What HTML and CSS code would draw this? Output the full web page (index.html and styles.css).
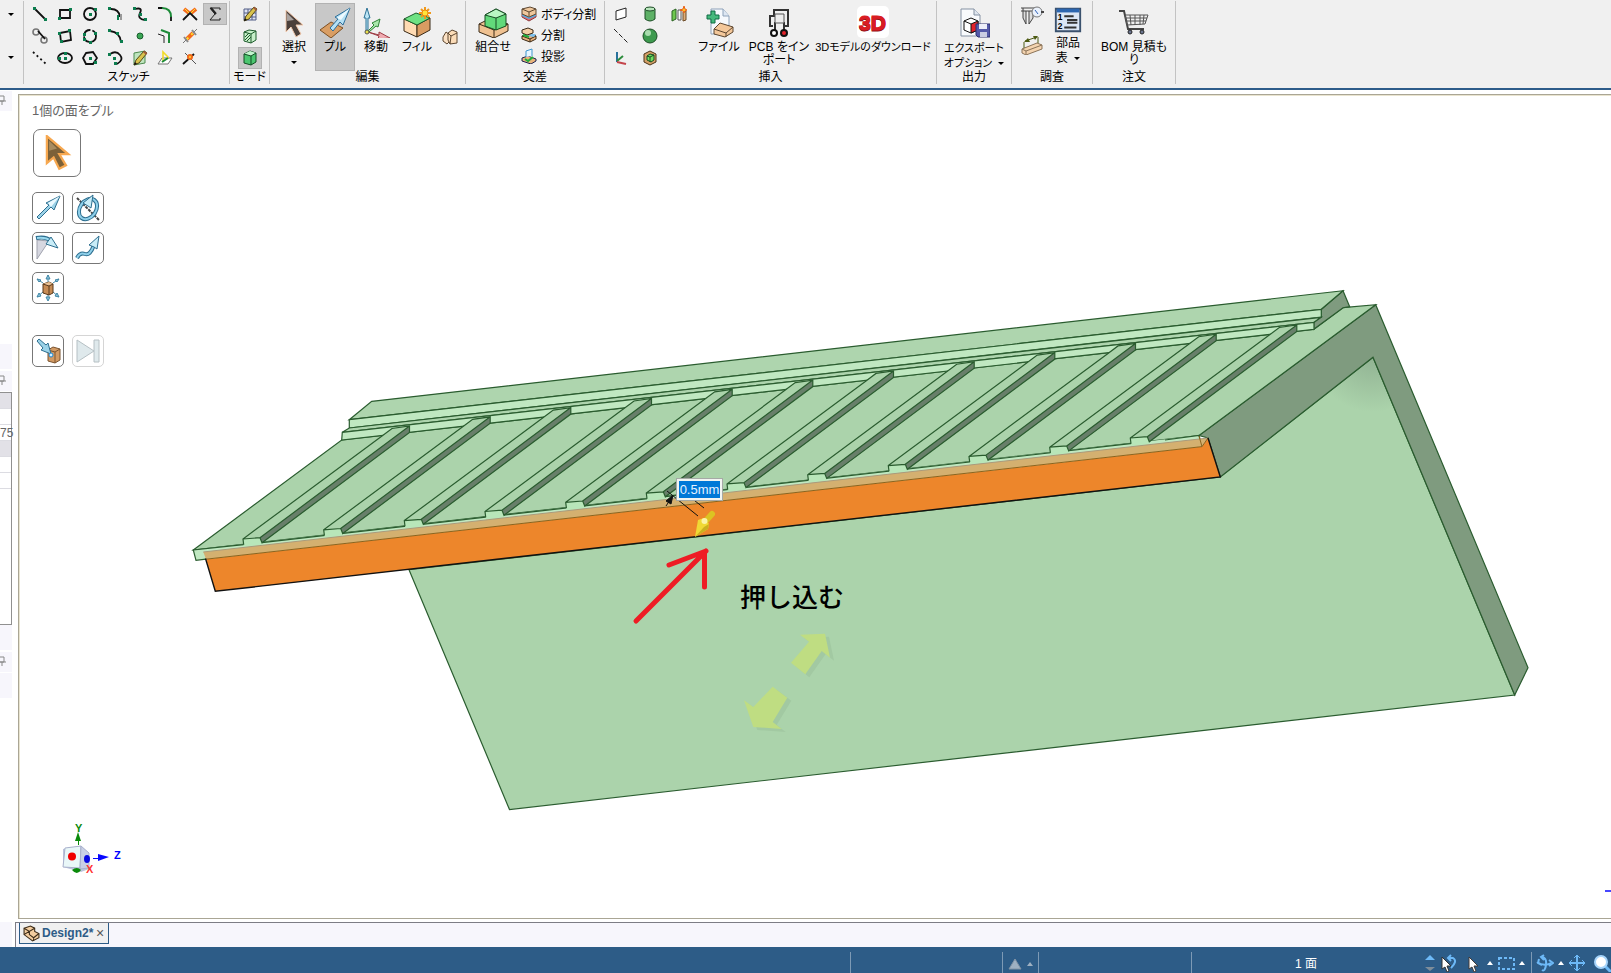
FILE: index.html
```
<!DOCTYPE html>
<html lang="ja">
<head>
  <meta charset="UTF-8">
  <title>Design2</title>
  <link rel="stylesheet" href="styles.css">
</head>
<body>
  <!-- リボン -->
  <header class="ribbon">
    <section class="group stub">
      <button class="drop" title="その他"><span class="caret"></span></button>
      <button class="drop" title="その他"><span class="caret"></span></button>
    </section>

    <section class="group sketch">
      <div class="sketch-grid">
        <button class="tool" title="線"><svg viewBox="0 0 16 16"><path class="ln" d="M3 3l10 10"/><path class="nd" d="M1 1h3v3h-3zM12 12h3v3h-3z"/></svg></button>
        <button class="tool" title="長方形"><svg viewBox="0 0 16 16"><path class="ln" d="M3 4h10v8h-10z"/><path class="nd" d="M1 11h3v3h-3zM12 2h3v3h-3z"/></svg></button>
        <button class="tool" title="円"><svg viewBox="0 0 16 16"><circle class="ln" cx="8" cy="8" r="6"/><path class="nd" d="M7 7h3v3h-3zM12 2h3v3h-3z"/></svg></button>
        <button class="tool" title="接円弧"><svg viewBox="0 0 16 16"><path class="ln" d="M4 3q8 0 9 8"/><path d="M14 8v6" stroke="#999" stroke-width="2"/><path class="nd" d="M1 1h3v3h-3zM10 9h2v5h-2z"/></svg></button>
        <button class="tool" title="スプライン"><svg viewBox="0 0 16 16"><path class="ln" d="M3 3q8-2 5 4t5 7"/><path class="nd" d="M1 1h3v3h-3zM7 7h3v3h-3zM12 12h3v3h-3z"/></svg></button>
        <button class="tool" title="丸コーナー"><svg viewBox="0 0 16 16"><path class="ln" d="M1 2h5M14 10v5"/><path class="gn" d="M5 2q9 0 9 9"/></svg></button>
        <button class="tool" title="トリム"><svg viewBox="0 0 16 16"><path d="M2 3l5 4M14 3l-5 4" stroke="#f36a1c" stroke-width="4"/><path d="M3 3l4 4M13 3l-4 4" stroke="#ffe12e"/><path class="ln" d="M1 14l7-7l7 7"/></svg></button>
        <button class="tool on" title="数式"><svg viewBox="0 0 16 16"><path class="thin" d="M13 4v-2h-10l5 6l-5 6h10v-2"/><path d="M4 2l5 6" stroke="#222" stroke-width="2"/></svg></button>

        <button class="tool" title="接線"><svg viewBox="0 0 16 16"><circle cx="4" cy="4" r="3" fill="none" stroke="#777" stroke-width="1.6"/><circle cx="12" cy="12" r="3" fill="none" stroke="#777" stroke-width="1.6"/><path class="ln" d="M6 3l7 8"/></svg></button>
        <button class="tool" title="3点長方形"><svg viewBox="0 0 16 16"><path class="ln" d="M3 5l10-2l1 9l-10 2z"/><path class="nd" d="M1 4h3v3h-3zM11 1h3v3h-3zM3 12h3v3h-3z"/></svg></button>
        <button class="tool" title="3点円"><svg viewBox="0 0 16 16"><circle class="ln" cx="8" cy="8" r="6" stroke-dasharray="8 2"/><path class="nd" d="M1 5h3v3h-3zM12 4h3v3h-3zM7 13h3v3h-3zM1 10h3v3h-3z"/></svg></button>
        <button class="tool" title="3点円弧"><svg viewBox="0 0 16 16"><path class="ln" d="M3 3q10 1 11 11"/><path class="nd" d="M1 1h3v3h-3zM9 4h3v3h-3zM13 12h3v3h-3z"/></svg></button>
        <button class="tool" title="点"><svg viewBox="0 0 16 16"><circle cx="8" cy="8" r="3" fill="#3aa655" stroke="#185c2b"/></svg></button>
        <button class="tool" title="オフセット"><svg viewBox="0 0 16 16"><path class="thin" d="M1 6l6 2v7"/><path class="gn" d="M4 2l8 3v10"/></svg></button>
        <button class="tool" title="分割"><svg viewBox="0 0 16 16"><path d="M1 15l14-14" stroke="#777"/><path d="M5 11l6-6" stroke="#f36a1c" stroke-width="4"/><path d="M10 2l4 5M2 9l4 5" stroke="#888" stroke-width="2"/><path d="M5 11l6-6" stroke="#ffe12e" stroke-width="2" stroke-dasharray="2 4"/></svg></button>
        <span></span>

        <button class="tool" title="作成線"><svg viewBox="0 0 16 16"><path class="ln" stroke-dasharray="2 3" d="M1 2l13 12"/></svg></button>
        <button class="tool" title="楕円"><svg viewBox="0 0 16 16"><ellipse class="ln" cx="8" cy="8" rx="7" ry="5"/><path class="nd" d="M1 7h3v3h-3zM7 7h3v3h-3zM7 2h3v3h-3z"/></svg></button>
        <button class="tool" title="多角形"><svg viewBox="0 0 16 16"><path class="ln" d="M4 3l7-1l4 6l-4 6h-7l-3-6z"/><path class="nd" d="M7 7h3v3h-3zM12 11h3v3h-3z"/></svg></button>
        <button class="tool" title="掃引円弧"><svg viewBox="0 0 16 16"><path class="ln" d="M3 4q6-4 10 1t-3 9"/><path class="nd" d="M1 3h3v3h-3zM6 7h3v3h-3zM7 12h3v3h-3z"/></svg></button>
        <button class="tool" title="面カーブ"><svg viewBox="0 0 16 16"><path d="M2 3l11-2v12l-11 2z" fill="#bfe5be" stroke="#4d8a4f"/><use href="#pencil"/></svg></button>
        <button class="tool" title="スケッチに投影"><svg viewBox="0 0 16 16"><path d="M1 14l4-6h10l-4 6z" fill="#fff" stroke="#777"/><path d="M6 11v-9l5 5v2" fill="none" stroke="#f2dc28" stroke-width="1.6"/><path class="gn" d="M5 12l6-4"/></svg></button>
        <button class="tool" title="コーナー作成"><svg viewBox="0 0 16 16"><path class="ln" d="M1 14l11-10"/><path d="M3 3l11 11" stroke="#555"/><circle cx="8" cy="7" r="3" fill="#f36a1c"/><circle cx="8" cy="7" r="1" fill="#ffe12e"/></svg></button>
      </div>
      <h2>スケッチ</h2>
    </section>

    <section class="group mode">
      <div class="stack">
        <button class="tool" title="スケッチモード"><svg viewBox="0 0 16 16"><path d="M2 3h12v11h-12zM6 3v11M10 3v11M2 7h12M2 11h12" fill="#dfe3f2" stroke="#515c85"/><use href="#pencil"/></svg></button>
        <button class="tool" title="断面モード"><svg viewBox="0 0 16 16"><path d="M2 4l5-2l7 1v9l-5 3l-7-2z" fill="#c6efc9" stroke="#1c5a2b"/><path d="M2 4l7 2v9M9 6l5-3M3 9l4-4M3 12l5-5M5 13l4-4" fill="none" stroke="#1c5a2b"/></svg></button>
        <button class="tool on" title="3Dモード"><svg viewBox="0 0 16 16"><path d="M2 4l6-3l6 2v9l-5 3l-7-2z" fill="#4bc66f" stroke="#134d24"/><path d="M2 4l6-3l6 2l-5 3z" fill="#c3f4cd"/><path d="M2 4l7 2v9M9 6l5-3" fill="none" stroke="#134d24"/></svg></button>
      </div>
      <h2>モード</h2>
    </section>

    <section class="group edit">
      <div class="row">
        <button class="big">
          <svg viewBox="0 0 32 32"><path d="M8 4v22l5-5l5 10l5-3l-5-9h7z" fill="#4b403b" stroke="#f2c9ad"/><path d="M9 7v8l7-1z" fill="#aaa3a0"/></svg>
          選択<span class="caret"></span>
        </button>
        <button class="big on">
          <svg viewBox="0 0 32 32"><path d="M1 24l11-8l12 6l-12 10z" fill="#d99e64" stroke="#7d4f22"/><path d="M11 22l8-9l-3-2l15-9l-7 17l-3-3l-7 9z" fill="#b5e1f5" stroke="#2d6e99"/><path d="M18 12l13-10l-9 12z" fill="#eefaff"/></svg>
          プル
        </button>
        <button class="big">
          <svg viewBox="0 0 32 32"><path d="M6 26v-14h-2l3-10l3 10h-2v14z" fill="#bde6f6" stroke="#2d7296"/><path d="M8 25l6-6l-2-2l8-4l-2 8l-2-1l-7 6z" fill="#a9e7ab" stroke="#2d8236"/><path d="M8 26l11 3v-3l11 6l-12 1l1-3z" fill="#f0aab0" stroke="#9d3d45"/><circle cx="7" cy="26" r="2" fill="#e9df4b" stroke="#555"/></svg>
          移動
        </button>
        <button class="big">
          <svg viewBox="0 0 32 32"><path d="M3 13l13 6v12l-13-6z" fill="#ffdbb3" stroke="#3a2a17"/><path d="M16 19l13-7v12l-13 7z" fill="#d99c62" stroke="#3a2a17"/><path d="M3 13l12-6l14 5l-13 7z" fill="#6fe283" stroke="#1d5c2b"/><path d="M24 1v12M18 7h12M20 3l8 8M28 3l-8 8" stroke="#f19a1c" stroke-width="2"/><circle cx="24" cy="7" r="3" fill="#ffe53b" stroke="#e88712"/></svg>
          フィル
        </button>
        <button class="tool side" title="置換"><svg viewBox="0 0 16 16"><path d="M1 8l3-5l4 3v6l-3 3l-4-3z" fill="#fbe1c4" stroke="#5c4630"/><path d="M6 4l4-3l5 2v11l-7 1l-2-4z" fill="#fbdcb8" stroke="#5c4630"/><path d="M6 4l3 3l6-3M9 7l-1 8" fill="none" stroke="#5c4630"/></svg></button>
      </div>
      <h2>編集</h2>
    </section>

    <section class="group cross">
      <div class="row">
        <button class="big wide">
          <svg viewBox="0 0 32 32"><path d="M2 18l10-5l19 5v7l-14 7l-15-6z" fill="#efc191" stroke="#3a2a17"/><path d="M2 18l15 6v8M17 24l14-6" fill="none" stroke="#3a2a17"/><path d="M8 9l11-6l10 5v12l-10 4l-11-4z" fill="#62d97a" stroke="#174d23"/><path d="M8 9l11-6l10 5l-10 4z" fill="#b9f6c3" stroke="#174d23"/><path d="M19 12v12" stroke="#174d23"/></svg>
          組合せ
        </button>
        <div class="list">
          <button class="item"><svg viewBox="0 0 16 16"><path d="M1 11l7 4l7-4v-3h-14z" fill="#e06b70" stroke="#8e3a3d"/><path d="M1 8l7 3l7-3v2l-7 3l-7-3z" fill="#5aa9dd"/><path d="M1 3l8-2l6 2v5l-7 3l-7-3z" fill="#efc79c" stroke="#5c4630"/><path d="M1 3l7 3l7-3M8 6v4" fill="none" stroke="#5c4630"/></svg>ボディ分割</button>
          <button class="item"><svg viewBox="0 0 16 16"><path d="M1 9l7-3l7 3v3l-6 3l-8-3z" fill="#e8b27c" stroke="#3a2a17"/><path d="M1 9l8 3l6-3M9 12v3" fill="none" stroke="#3a2a17"/><path d="M7 9l3-2h5l-2 3z" fill="#7cc0ec"/><path d="M1 3l6-2l5 2v3l-6 2l-5-2z" fill="#f5cfa5" stroke="#3a2a17"/><path d="M2 8l6 2" stroke="#1fae3a" stroke-width="2"/></svg>分割</button>
          <button class="item"><svg viewBox="0 0 16 16"><path d="M1 10l6-2l8 3v2l-5 3l-9-3z" fill="#e8b27c" stroke="#1d2350"/><path d="M5 9v-6l6-2v7" fill="#e6f6ff" stroke="#3e96cf"/><path d="M4 11l3 2l5-4" fill="none" stroke="#1fae3a" stroke-width="2"/></svg>投影</button>
        </div>
      </div>
      <h2>交差</h2>
    </section>

    <section class="group insert">
      <div class="row">
        <div class="insert-grid">
          <button class="tool" title="平面"><svg viewBox="0 0 16 16"><path d="M3 5l10-3v9l-10 3z" fill="#fff" stroke="#222"/></svg></button>
          <button class="tool" title="円柱"><svg viewBox="0 0 16 16"><path d="M3 3v10q5 4 10 0v-10z" fill="#5eb167" stroke="#1d4d26"/><ellipse cx="8" cy="3" rx="5" ry="2" fill="#b7e4bb" stroke="#1d4d26"/></svg></button>
          <button class="tool" title="シェル"><svg viewBox="0 0 16 16"><path d="M1 5l4-2v10l-4 2z" fill="#6fc84f" stroke="#2b6322"/><path d="M7 4h3v10h-3z" fill="#fff" stroke="#555"/><path d="M12 6l3-1v9l-3 1z" fill="#e0ad78" stroke="#6b4a26"/><path d="M13 0l1 3l2 1l-2 1l-1 2l-1-2l-3-1l3-1z" fill="#ffc321" stroke="#e8611c"/></svg></button>
          <button class="tool" title="軸"><svg viewBox="0 0 16 16"><path class="thin" stroke-dasharray="5 2" d="M1 1l14 14"/></svg></button>
          <button class="tool" title="球"><svg viewBox="0 0 16 16"><circle cx="8" cy="8" r="7" fill="#3d9a4e" stroke="#1d4d26"/><circle cx="6" cy="5" r="3" fill="#a9dcae"/></svg></button>
          <span></span>
          <button class="tool" title="原点"><svg viewBox="0 0 16 16"><path d="M4 2v10" stroke="#28719c" stroke-width="2"/><path d="M4 11l6-5" stroke="#2d8c3c" stroke-width="2"/><path d="M4 12l9 2" stroke="#c4454b" stroke-width="2"/></svg></button>
          <button class="tool" title="エンクロージャ"><svg viewBox="0 0 16 16"><path d="M2 4l6-3l6 3v8l-6 3l-6-3z" fill="#d59f66" stroke="#4a3418"/><path d="M5 6l3-2l4 1v5l-3 2l-4-2z" fill="#70dd5f" stroke="#174d23"/><path d="M5 6l3 1v5M8 7l4-2" fill="none" stroke="#174d23"/></svg></button>
        </div>
        <button class="big file">
          <svg viewBox="0 0 32 32"><path d="M8 3h12l6 7v18h-18z" fill="#f6f9fd" stroke="#8ea2ba"/><path d="M20 3v7h6" fill="#dde7f3" stroke="#8ea2ba"/><path d="M8 5h4v4h4v4h-4v4h-4v-4h-4v-4h4z" fill="#45b97c" stroke="#116d45"/><path d="M11 23l6-6l13 4v5l-8 5l-11-3z" fill="#f3c79a" stroke="#5c4630"/><path d="M11 23l12 4l7-6M23 27v4" fill="none" stroke="#5c4630"/></svg>
          ファイル
        </button>
        <button class="big pcb">
          <svg viewBox="0 0 32 32"><path d="M10 20h-3v-10h4v-6h14v16h-4M12 24v-8M21 24v-8" fill="none" stroke="#333" stroke-width="2"/><path d="M12 8h9v9h-9z" fill="#eee" stroke="#555"/><circle cx="11" cy="27" r="3" fill="#fff" stroke="#111" stroke-width="2"/><circle cx="21" cy="27" r="3" fill="#e3222a" stroke="#111" stroke-width="2"/></svg>
          PCB をイン<br>ポート
        </button>
        <button class="big model">
          <svg viewBox="0 0 32 32"><rect width="32" height="32" rx="5" fill="#fff"/><text class="logo3d shade" x="2" y="25">3D</text><text class="logo3d" x="2" y="24">3D</text></svg>
          3Dモデルのダウンロード
        </button>
      </div>
      <h2>挿入</h2>
    </section>

    <section class="group output">
      <button class="big tall">
        <svg viewBox="0 0 32 32"><path d="M3 3h13l6 6v21h-19z" fill="#f8fafc" stroke="#8592a3"/><path d="M16 3v6h6" fill="#dfe6ef" stroke="#8592a3"/><path d="M6 15l7-3l7 3v9l-7 3l-7-3z" fill="#fff" stroke="#111"/><path d="M13 18l7-3v9l-7 3z" fill="#e3222a" stroke="#111"/><path d="M6 15l7 3" stroke="#111"/><path d="M18 18h14v13h-12l-2-2z" fill="#5459a8" stroke="#2d3170"/><path d="M21 18h8v5h-8z" fill="#eceef8"/><path d="M22 26h7v5h-7z" fill="#c9cce2"/></svg>
        <span>エクスポート<br>オプション <span class="caret"></span></span>
      </button>
      <h2>出力</h2>
    </section>

    <section class="group check">
      <div class="row">
        <div class="measure">
          <button class="tool" title="測定"><svg viewBox="0 0 24 20"><path d="M1 2h14M1 5h14M3 2v10l3 6v-13M9 5v13l4-6v-7" fill="#ddd" stroke="#444"/><circle cx="17" cy="6" r="5" fill="#eaf1fb" stroke="#777"/><path d="M15 4l3 4" stroke="#3162b8"/><path d="M21 6h3" stroke="#444" stroke-width="2"/></svg></button>
          <button class="tool" title="寸法"><svg viewBox="0 0 24 20"><path d="M2 14l15-6l5 2v4l-16 6l-4-2z" fill="#f4d4b0" stroke="#8a7358"/><path d="M2 14l4 2l16-6M6 16v4" fill="none" stroke="#8a7358"/><path d="M4 13v-6M18 8v-6M5 6l12-4" stroke="#4c5a12"/><path d="M4 7l4-4l2 4zM18 1h-5l2 4z" fill="#4c5a12"/></svg></button>
        </div>
        <button class="big parts">
          <svg viewBox="0 0 32 32"><path d="M3 5h26v24h-26z" fill="#dbe6f5" stroke="#3b526e" stroke-width="2"/><path d="M4 5h24v4h-24z" fill="#2c66b0"/><path d="M12 13h10M15 17h11M15 20h11M12 25h13" stroke="#333" stroke-width="2"/><text x="5" y="17" class="num">1</text><text x="5" y="27" class="num">2</text></svg>
          <span>部品<br>表 <span class="caret"></span></span>
        </button>
      </div>
      <h2>調査</h2>
    </section>

    <section class="group order">
      <button class="big tall">
        <svg viewBox="0 0 32 32"><path d="M1 5h5l4 18h16" fill="none" stroke="#444" stroke-width="2"/><path d="M7 9h23l-3 9l-18 1zM8 12h21M8 15h20M12 9l1 10M17 9v10M22 9v10M26 9l-1 9" fill="none" stroke="#555"/><circle cx="12" cy="26" r="2" fill="#6b7590" stroke="#222"/><circle cx="24" cy="26" r="2" fill="#6b7590" stroke="#222"/></svg>
        BOM 見積も<br>り
      </button>
      <h2>注文</h2>
    </section>
  </header>

  <!-- 作業エリア -->
  <main class="work">
    <aside class="panels">
      <div class="panel-head"><svg class="pin" viewBox="0 0 6 10"><path d="M0 1h4v5h-4M0 6h6M2 6v4" fill="none" stroke="#888"/></svg></div>
      <div class="panel-tree"></div>
      <div class="panel-foot"></div>
      <div class="panel-head"><svg class="pin" viewBox="0 0 6 10"><path d="M0 1h4v5h-4M0 6h6M2 6v4" fill="none" stroke="#888"/></svg></div>
      <div class="props">
        <div class="prop cat"></div>
        <div class="prop"></div>
        <div class="prop val">75</div>
        <div class="prop cat"></div>
        <div class="prop"></div>
        <div class="prop"></div>
      </div>
      <div class="panel-foot"></div>
      <div class="panel-head"><svg class="pin" viewBox="0 0 6 10"><path d="M0 1h4v5h-4M0 6h6M2 6v4" fill="none" stroke="#888"/></svg></div>
      <div class="panel-foot"></div>
    </aside>

    <section class="viewport">
      <svg class="scene" viewBox="20 96 1591 822" preserveAspectRatio="xMinYMin meet">
        <defs>
          <!-- 鉛筆（ツールアイコン共用） -->
          <g id="pencil"><path d="M2 15l2-5l8-9l3 2l-8 10z" fill="#d9c34c" stroke="#54491c"/><path d="M2 15l1-3l2 2z" fill="#111"/><path d="M11 2l1-1l3 2l-1 2z" fill="#a55a3a"/></g>
          <radialGradient id="wall" gradientUnits="userSpaceOnUse" cx="1373" cy="352" r="60">
            <stop offset="0" stop-color="#8fb091"/><stop offset="1" stop-color="#abd3ab"/>
          </radialGradient>
          <!-- リブ1本分 -->
          <g id="rib">
            <path d="M243 539l139-103l10-8l18-2l-150 112z" fill="#abd3ab"/>
            <path d="M260 537.7L409.5 426v6.5L262 543z" fill="#687f6a"/>
            <path d="M243 539l17-1.3l2 5l-1 5l-17 2l-.3-5z" fill="#b8e6b9"/>
            <path d="M243.7 544.7l-.7-5.7L382 436l10-7.5l17.5-2.5v6.5L262 542.7l-2-5L409.5 426M243 539l17-1.3" class="edge"/>
          </g>
        </defs>

        <!-- 下側の壁 -->
        <path class="edge wall" d="M409 569.7L509.5 809.5L1514.7 695L1373 357.3L1220 477z"/>
        <path class="edge dark" d="M1199 435.5L1375.7 304.7L1528 667.7L1514.7 695L1373 357.3L1220.3 477L1208 438z"/>
        <!-- 屋根面 -->
        <path class="edge face" d="M193.3 550L341.7 440L1313.7 329.3L1343 307.7L1375.7 304.7L1199 435.5z"/>
        <!-- 棟 -->
        <path class="edge dark" d="M1321.3 309.3L1343 290.7L1349.7 306.7L1343 307.7L1313.7 329.3V322L1321 317z"/>
        <path class="edge top" d="M371.7 401.3L1343 290.7L1321.3 309.3L349.3 419.7z"/>
        <path class="edge lit" d="M349.3 419.7L1321.3 309.3V317L349.3 428z"/>
        <path class="edge top" d="M349.3 428L1321 317.3L1314 322.3L342.3 432.3z"/>
        <path class="edge lit" d="M342.3 432.3L1314 322.3V329.3L341.7 440z"/>
        <!-- 軒先 -->
        <path class="lit" d="M193.3 550L1199 435.5L1202 446.6L196 560.3z"/>
        <path class="edge" d="M243.7 544.7L193.3 550L196 560.3L206 559.2M1165 440L1199 435.5L1202 446"/>
        <path class="edge" d="M262 542.7L1148 441.7"/>
        <use href="#rib"/>
        <use href="#rib" x="80.7" y="-9.2"/>
        <use href="#rib" x="161.3" y="-18.4"/>
        <use href="#rib" x="242" y="-27.5"/>
        <use href="#rib" x="322.7" y="-36.7"/>
        <use href="#rib" x="403.3" y="-45.9"/>
        <use href="#rib" x="484" y="-55.1"/>
        <use href="#rib" x="564.7" y="-64.3"/>
        <use href="#rib" x="645.3" y="-73.4"/>
        <use href="#rib" x="726" y="-82.6"/>
        <use href="#rib" x="806.7" y="-91.8"/>
        <use href="#rib" x="887.3" y="-101"/>
        <!-- 選択中の面 -->
        <path d="M206 559.2L1202 446.6L1208 438L1220.3 477L215.3 591.3z" fill="#ed862b"/>
        <path d="M203.3 552L1208 438L1202 446.6L206 559.2z" fill="#d4b070"/>
        <path d="M203.3 552L1208 438" stroke="#aa9a7c"/>
        <path d="M206 559.2L1202 446.6L1208 438M1199 436L1202 446.6" fill="none" stroke="#8a641e"/>
        <path d="M205.5 558.5L215.3 591.3L1220.3 477L1208 438" fill="none" stroke="#111" stroke-width="1.4"/>

        <!-- 寸法線とハンドル -->
        <path d="M667 491l31 25M690 497l14 11M672 497l-6 9" stroke="#111" fill="none"/>
        <path d="M673 495l-7 6l5 3z" fill="#111" stroke="#111"/>
        <path d="M712 514l-8 9" stroke="#dcc322" stroke-width="6" stroke-linecap="round"/>
        <path d="M695 537l3-17l6-2l5 6l-1 5z" fill="#f0d935"/>
        <path d="M695 537l9-10l5-3l-1 5z" fill="#cbb01f"/>
        <circle cx="704.5" cy="521" r="3" fill="#fbf3a8"/>

        <g class="hint shadow" transform="translate(4 3)">
          <path d="M800 634.7L825 633.7L830 657.7L821.7 651L805.3 674.3L791 662.7L809 641.7z"/>
          <path d="M772.7 686.7L787.3 697.7L772.7 722L781.7 729L753.3 727L744 700.3L753.3 707z"/>
        </g>
        <g class="hint">
          <path d="M800 634.7L825 633.7L830 657.7L821.7 651L805.3 674.3L791 662.7L809 641.7z"/>
          <path d="M772.7 686.7L787.3 697.7L772.7 722L781.7 729L753.3 727L744 700.3L753.3 707z"/>
        </g>

        <!-- 注釈 -->
        <path class="note-arrow" d="M636 621L706 551M669 565L706 551M704.5 587V553"/>
        <text class="note" x="740" y="607">押し込む</text>

        <!-- 座標軸 -->
        <path d="M63 849l17-3l9 7v16l-8 3l-18-5z" fill="#bcc3dc"/>
        <path d="M65 848l16-2l-1 22l-17-1z" fill="#e9f7f8" stroke="#a9b1cc"/>
        <path d="M81 846l8 7v15l-9 1z" fill="#c9d0e6" stroke="#a9b1cc"/>
        <circle cx="72" cy="856.5" r="4" fill="#f00000"/>
        <ellipse cx="87" cy="859" rx="3" ry="4" fill="#0808e0"/>
        <path d="M72 870q5-4 9 0q-4 6-9 0z" fill="#0a8a0a"/>
        <path d="M78 845v-4h-3l3-9l3 9h-2v4z" fill="#0a8a0a"/>
        <path d="M93 858h5v-4l11 3l-11 4v-2h-5z" fill="#0808ff"/>
        <text class="axis y" x="75" y="832">Y</text>
        <text class="axis z" x="114" y="859">Z</text>
        <text class="axis x" x="86" y="873">X</text>
        <path d="M1605 891h6" stroke="#4646ff" stroke-width="2"/>
      </svg>

      <div class="palette">
        <p class="status-hint">1個の面をプル</p>
        <button class="pick" title="選択"><svg viewBox="0 0 32 32"><path d="M7 1v24l6-5l5 10l6-3l-6-10h8z" fill="#7c6138" stroke="#f7a850" stroke-width="2"/><path d="M9 5v9l7-2z" fill="#a88c60"/></svg></button>
        <div class="palette-grid">
          <button title="方向"><svg viewBox="0 0 28 28"><path d="M3 23l12-12l-3-2l14-7l-6 14l-3-3l-12 12z" fill="#9bd2e8" stroke="#2d6e8f"/><path d="M14 9l12-7l-9 11z" fill="#eaf9ff"/></svg></button>
          <button title="回転"><svg viewBox="0 0 28 28"><path d="M3 4l22 22" stroke="#444" stroke-width="2" stroke-dasharray="3 1"/><ellipse cx="14" cy="15" rx="8" ry="11" transform="rotate(35 14 15)" fill="none" stroke="#2d6e8f" stroke-width="4"/><ellipse cx="14" cy="15" rx="8" ry="11" transform="rotate(35 14 15)" fill="none" stroke="#8fd0ea" stroke-width="2"/><path d="M9 9l10-8l-2 13l-3-2z" fill="#c9edf8" stroke="#2d6e8f"/></svg></button>
          <button title="ドラフト"><svg viewBox="0 0 28 28"><path d="M3 6v19l12-18z" fill="#d6d7e0" stroke="#a0a3ae"/><path d="M2 4q10-2 15 3" fill="none" stroke="#2d6e8f" stroke-width="4"/><path d="M3 4q9-1 14 3" fill="none" stroke="#9bdaf0" stroke-width="2"/><path d="M17 3l7 11l-12-4z" fill="#c9edf8" stroke="#2d6e8f"/></svg></button>
          <button title="スイープ"><svg viewBox="0 0 28 28"><path d="M3 24q3-6 8-4t9-9" fill="none" stroke="#2d6e8f" stroke-width="4"/><path d="M3 24q3-6 8-4t9-9" fill="none" stroke="#8fd0ea" stroke-width="2"/><path d="M15 11l10-9l-2 13l-3-2z" fill="#c9edf8" stroke="#2d6e8f"/></svg></button>
          <button title="本体のスケール"><svg viewBox="0 0 28 28"><path d="M14 1v7M14 20v6M3 5l6 4M25 5l-6 4M3 23l6-5M25 23l-6-5" stroke="#4187a6"/><path d="M12 5l2-4l2 4zM12 23l2 4l2-4zM3 5l4 1l-2 2zM25 5l-4 1l2 2zM3 23l2-4l2 3zM25 23l-2-4l-2 3z" fill="#8fc6dd" stroke="#4187a6"/><path d="M9 10l6-2l4 2v9l-4 2l-6-2z" fill="#c68b54" stroke="#59391b"/><path d="M9 10l6-2l4 2l-4 2z" fill="#e8bf93"/><path d="M9 10l6 2v9M15 12l4-2" fill="none" stroke="#59391b"/></svg></button>
        </div>
        <div class="palette-grid last">
          <button title="まで"><svg viewBox="0 0 28 28"><path d="M14 13l5-3l7 2v11l-5 3l-7-2z" fill="#d39a63" stroke="#7a5430"/><path d="M14 13l7 2v11M21 15l5-3" fill="none" stroke="#7a5430"/><path d="M3 4l2-2l7 6l2-2l3 11l-10-4l2-2z" fill="#9bd2e8" stroke="#2d6e8f"/><circle cx="17" cy="18" r="2" fill="#d7f1ff" stroke="#1b86d4"/></svg></button>
          <button title="完了" disabled><svg viewBox="0 0 28 28"><path d="M3 3v22l17-11z" fill="#dfe9ec" stroke="#b6c0c4"/><path d="M20 3h5v22h-5z" fill="#dfe9ec" stroke="#b6c0c4"/></svg></button>
        </div>
      </div>

      <input class="dim" type="text" value="0.5mm" aria-label="距離">
    </section>
  </main>

  <!-- ドキュメントタブ -->
  <nav class="tabs">
    <div class="tabs-edge"></div>
    <div class="tabs-list">
      <div class="tab">
        <svg viewBox="0 0 16 16"><path d="M1 3l6-2l4 2v3l4 2v4l-6 3l-8-6z" fill="#f3cd9f" stroke="#3a2a17"/><path d="M1 3l5 3l5-3M6 6v3l4 3l5-4M10 12v3M1 9l5-3" fill="none" stroke="#3a2a17"/></svg>
        <a href="#">Design2*</a>
        <button title="閉じる">×</button>
      </div>
    </div>
  </nav>

  <!-- ステータスバー -->
  <footer class="status">
    <div class="cell message"></div>
    <div class="cell info"></div>
    <div class="cell warn">
      <svg viewBox="0 0 14 12"><path d="M7 1l6 10h-12z" fill="#9fb1c2" stroke="#8193a5"/></svg>
      <span class="up dim-up"></span>
    </div>
    <div class="cell coords"></div>
    <div class="cell count">1 面</div>
    <div class="view-tools">
      <button title="選択履歴"><svg viewBox="0 0 16 18"><path d="M8 1l5 5h-10z" fill="#6db9f7"/><path d="M8 17l5-4h-10z" fill="#7e8d9a"/></svg></button>
      <button class="w24" title="選択を戻す"><svg viewBox="0 0 18 18"><path d="M11 14q7-7 2-10h-4M11 1l-3 3l3 3" fill="none" stroke="#6db9f7" stroke-width="2"/><path d="M2 3v12l3-2l2 5l2-1l-2-5h4z" fill="#fff" stroke="#333"/></svg></button>
      <button class="w24" title="選択モード"><svg viewBox="0 0 18 18"><path d="M4 3v12l3-2l2 5l2-1l-2-5h4z" fill="#fff" stroke="#443b36"/></svg></button>
      <span class="up"></span>
      <button class="w24" title="ボックス選択"><svg viewBox="0 0 18 18"><path d="M2 4h15v11h-15z" fill="none" stroke="#6db9f7" stroke-width="2" stroke-dasharray="3 2"/></svg></button>
      <span class="up"></span>
      <span class="rule"></span>
      <button class="w24" title="回転"><svg viewBox="0 0 18 18"><path d="M6 3q5 1 4 8t-4 5M1 8q7 5 14 1M8 1l-3 2l3 3M13 6l4 3l-4 3M3 5l-1 4l4 2" fill="none" stroke="#6db9f7" stroke-width="2"/></svg></button>
      <span class="up"></span>
      <button class="w24" title="パン"><svg viewBox="0 0 18 18"><path d="M9 2v14M2 9h14" stroke="#6db9f7" stroke-width="2"/><path d="M6 4l3-3l3 3M6 14l3 3l3-3M4 6l-3 3l3 3M14 6l3 3l-3 3" fill="none" stroke="#6db9f7"/></svg></button>
      <button class="w24" title="ズーム"><svg viewBox="0 0 18 18"><path d="M12 12l6 6" stroke="#6db9f7" stroke-width="3"/><circle cx="8" cy="8" r="6" fill="#fff" stroke="#a5d4fb" stroke-width="2"/></svg></button>
    </div>
  </footer>
</body>
</html>
```

FILE: styles.css
```
*{
  box-sizing: border-box;
}
body{
  margin: 0;
  height: 100vh;
  display: flex;
  flex-direction: column;
  overflow: hidden;
  background: #fff;
  color: #000;
  font-family: "Liberation Sans", "Noto Sans CJK JP", sans-serif;
  font-size: 12px;
  font-feature-settings: "palt";
}
button{
  margin: 0;
  padding: 0;
  border: 1px solid transparent;
  background: none;
  color: inherit;
  font: inherit;
  font-feature-settings: inherit;
}
svg{
  display: block;
}
.caret{
  display: inline-block;
  border: 3px solid transparent;
  border-top-color: #000;
  border-bottom: 0;
}

/* リボン */
.ribbon{
  display: flex;
  height: 90px;
  flex: none;
  padding: 1px 0 4px;
  background: #f0f0f0;
  border-bottom: 2px solid #2d5c8a;
}
.group{
  display: flex;
  flex-direction: column;
  padding-top: 2px;
  border-right: 1px solid #c3c3c3;
}
.group h2{
  margin: auto 0 0;
  font-size: 12px;
  font-weight: normal;
  line-height: 13px;
  text-align: center;
}
.row{
  display: flex;
}
.stub{
  width: 24px;
  padding: 8px 0 0 6px;
  gap: 33px;
}
.drop{
  width: 10px;
  height: 10px;
  line-height: 0;
}
.sketch{
  width: 206px;
  padding-left: 4px;
}
.sketch-grid{
  display: grid;
  grid-template-columns: repeat(8, 25px);
  grid-auto-rows: 22px;
}
.tool{
  width: 24px;
  height: 22px;
  display: flex;
  align-items: center;
  justify-content: center;
}
.tool svg{
  width: 16px;
  height: 16px;
}
.on{
  background: #c8c8c8;
  border-color: #b2b2b2;
}
.ln{
  fill: none;
  stroke: #111;
  stroke-width: 1.8;
}
.thin{
  fill: none;
  stroke: #222;
}
.gn{
  fill: none;
  stroke: #1c8a38;
  stroke-width: 2;
}
.nd{
  fill: #0b7d4e;
}
.mode{
  width: 40px;
}
.stack{
  display: flex;
  flex-direction: column;
  align-items: center;
}
.big{
  width: 40px;
  height: 68px;
  display: flex;
  flex-direction: column;
  align-items: center;
  line-height: 13px;
  white-space: nowrap;
}
.big svg{
  width: 32px;
  height: 32px;
  flex: none;
  margin: 2px 0 3px;
}
.big .caret{
  margin-top: 7px;
}
.big span .caret{
  margin: 0 0 2px 3px;
}
.edit{
  width: 196px;
}
.edit .row{
  padding-left: 4px;
  gap: 1px;
}
.side{
  margin-top: 23px;
}
.cross{
  width: 139px;
}
.wide{
  width: 54px;
}
.item{
  display: flex;
  align-items: center;
  height: 21px;
  gap: 4px;
  white-space: nowrap;
}
.item svg{
  width: 16px;
  height: 16px;
}
.insert{
  width: 332px;
}
.insert .row{
  gap: 4px;
}
.insert-grid{
  display: grid;
  grid-template-columns: repeat(3, 29px);
  grid-auto-rows: 22px;
  padding-left: 4px;
  margin-right: -6px;
}
.file{
  width: 50px;
}
.pcb{
  width: 62px;
}
.model{
  width: 118px;
}
.model, .output .big{
  font-size: 11px;
}
.logo3d{
  font-family: "Liberation Sans", sans-serif;
  font-size: 21px;
  font-weight: bold;
  fill: #d91c24;
  stroke: #d91c24;
}
.shade{
  fill: #8d1015;
  stroke: #8d1015;
}
.output{
  width: 75px;
}
.tall{
  width: 100%;
}
.output .big, .parts{
  line-height: 15px;
  text-align: center;
}
.check{
  width: 81px;
}
.measure{
  width: 36px;
  padding: 2px 0 0 7px;
  display: flex;
  flex-direction: column;
  gap: 7px;
}
.measure .tool{
  width: 26px;
}
.measure svg{
  width: 24px;
  height: 20px;
}
.parts svg{
  width: 32px;
  height: 30px;
  margin: 0 0 2px;
}
.num{
  font-size: 9px;
  font-weight: bold;
}
.order{
  width: 83px;
}

/* 左パネル */
.work{
  flex: 1;
  display: flex;
  min-height: 0;
}
.panels{
  width: 18px;
  flex: none;
  padding: 1px 6px 0 0;
}
.panel-head{
  height: 20px;
  margin-bottom: 1px;
  padding-top: 4px;
  background: #f7f6fc;
}
.pin{
  width: 6px;
  height: 10px;
}
.panel-tree{
  height: 232px;
}
.panel-foot{
  height: 25px;
  margin-bottom: 2px;
  background: #f7f6fc;
}
.props{
  height: 233px;
  border: solid #909090;
  border-width: 1px 1px 1px 0;
}
.prop{
  height: 16px;
  border-bottom: 1px solid #dcdce2;
  line-height: 16px;
  color: #666;
}
.cat{
  background: #e2e1e7;
}

/* ビューポート */
.viewport{
  flex: 1;
  position: relative;
  margin: 4px 0 3px;
  border: solid #aaa695;
  border-width: 1px 0 1px 1px;
  box-shadow: inset 1px 1px #e9e4cf;
  overflow: hidden;
  padding: 1px 0 0 1px;
}
.scene{
  width: 100%;
}
.edge{
  fill: none;
  stroke: #2a5c2f;
  stroke-width: 1.2;
}
.wall{
  fill: url(#wall);
}
.face{
  fill: #abd3ab;
}
.top{
  fill: #aed5ae;
}
.lit{
  fill: #c0e8c1;
}
.dark{
  fill: #7f9b7f;
}
.hint{
  fill: #bfdd82;
}
.shadow{
  fill: #a2c9a2;
}
.note-arrow{
  fill: none;
  stroke: #ee1c24;
  stroke-width: 5;
  stroke-linecap: round;
}
.note{
  font-family: "Noto Sans CJK JP", sans-serif;
  font-size: 26px;
  font-weight: 500;
  font-feature-settings: normal;
}
.axis{
  font-size: 11px;
  font-weight: bold;
}
.x{
  fill: #f33;
}
.y{
  fill: #0a8a0a;
}
.z{
  fill: #00f;
}
.palette{
  position: absolute;
  top: 6px;
  left: 13px;
}
.status-hint{
  margin: 0 0 8px;
  font-size: 13px;
  line-height: 20px;
  color: #666;
}
.palette button{
  width: 32px;
  height: 32px;
  display: flex;
  align-items: center;
  justify-content: center;
  background: #fff;
  border: 1px solid #777;
  border-radius: 5px;
}
.palette button svg{
  width: 28px;
  height: 28px;
}
.palette .pick{
  width: 48px;
  height: 48px;
  margin-left: 1px;
  border-radius: 7px;
}
.palette .pick svg{
  width: 36px;
  height: 36px;
}
.palette button:disabled{
  border-color: #d5d5d5;
}
.palette-grid{
  display: grid;
  grid-template-columns: 32px 32px;
  gap: 8px;
  margin-top: 15px;
}
.last{
  margin-top: 31px;
}
.dim{
  position: absolute;
  top: 384px;
  left: 658px;
  width: 45px;
  height: 21px;
  padding: 0;
  border: 2px solid #f1f4f1;
  outline: 1px solid #a5a9a5;
  background: #0078d7;
  color: #e4f2ff;
  font-family: "Liberation Sans", sans-serif;
  font-size: 13px;
  text-align: center;
}

/* タブ */
.tabs{
  display: flex;
  flex: none;
  height: 25px;
}
.tabs-edge{
  width: 12px;
  margin-right: 3px;
  background: #f7f6fc;
}
.tabs-list{
  flex: 1;
  padding-left: 3px;
  border: solid #7d7d85;
  border-width: 1px 0 0 1px;
  background: #f7f6fc;
}
.tab{
  display: flex;
  align-items: center;
  width: 90px;
  height: 21px;
  padding-left: 3px;
  background: #f0f0f0;
  border: solid #2d5c87;
  border-width: 0 1px 1px;
}
.tab svg{
  width: 17px;
  height: 17px;
  margin-right: 2px;
}
.tab a{
  flex: 1;
  color: #2d5c87;
  font-weight: bold;
  text-decoration: none;
}
.tab button{
  width: 12px;
  margin-right: 2px;
  color: #555;
  font-size: 14px;
  line-height: 14px;
}

/* ステータスバー */
.status{
  display: flex;
  flex: none;
  height: 26px;
  padding-top: 5px;
  background: #2d5c87;
  color: #fff;
}
.cell{
  border-right: 1px solid #7d9ab5;
}
.message{
  flex: 1;
}
.info{
  width: 152px;
}
.warn{
  width: 36px;
  display: flex;
  align-items: center;
  justify-content: center;
  gap: 5px;
  padding-top: 3px;
}
.warn svg{
  width: 14px;
  height: 12px;
}
.up{
  flex: none;
  border: 3px solid transparent;
  border-bottom: 4px solid #fff;
  border-top: 0;
}
.dim-up{
  border-bottom-color: #9fb1c2;
}
.coords{
  width: 153px;
}
.count{
  width: 228px;
  border: 0;
  line-height: 24px;
  text-align: center;
}
.view-tools{
  display: flex;
  align-items: center;
  gap: 1px;
  width: 191px;
}
.view-tools button{
  width: 16px;
  flex: none;
}
.view-tools .w24{
  width: 24px;
  display: flex;
  justify-content: center;
}
.view-tools svg{
  width: 18px;
  height: 18px;
  flex: none;
}
.rule{
  width: 1px;
  height: 21px;
  margin-left: 5px;
  flex: none;
  background: #7d9ab5;
}
```
